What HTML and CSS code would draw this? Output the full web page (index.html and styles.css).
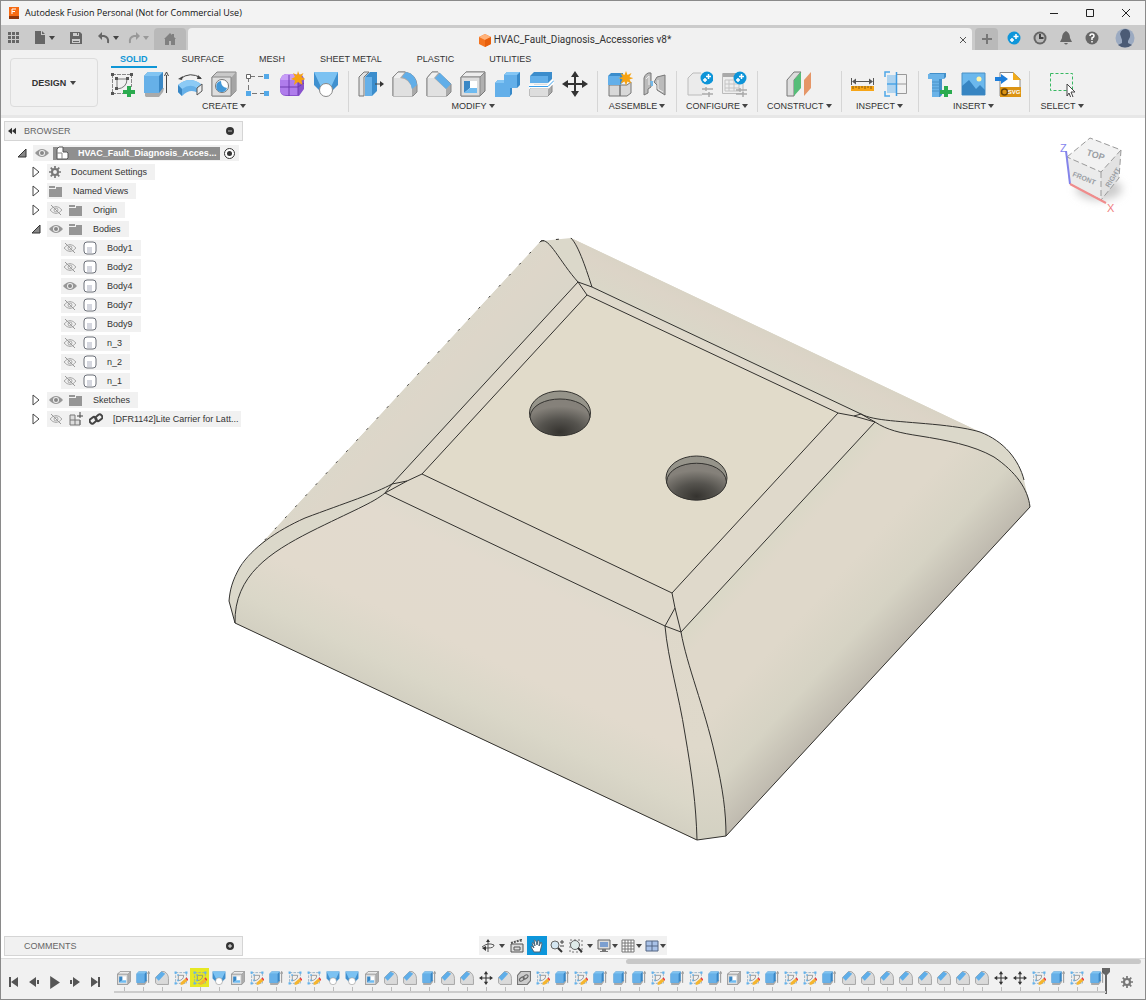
FILE: index.html
```html
<!DOCTYPE html>
<html lang="en">
<head>
  <meta charset="UTF-8" />
  <meta name="viewport" content="width=device-width, initial-scale=1.0"/>
  <title>Autodesk Fusion Personal (Not for Commercial Use)</title>
  <link rel="stylesheet" href="styles.css">
</head>
<body>
  <!-- shared icons -->
  <svg class="sprite" aria-hidden="true">
    <symbol id="sketch" viewBox="0 0 26 26">
      <path d="M3 3.5H23M3.5 3V23M22.5 3V16M3 22.5H14" fill="none" stroke="#888" stroke-dasharray="4 1"/>
      <path d="M8 8H18Q18 17 8 18Z" fill="none" stroke="#777"/>
      <path d="M2 2h3v3H2zM21 2h3v3h-3zM2 21h3v3H2zM6 6h3v3H6zM17 6h3v3h-3zM6 16h3v3H6z" fill="#555"/>
      <path d="M18 15h4v4h4v4h-4v4h-4v-4h-4v-4h4z" fill="#2bab4f"/>
    </symbol>
    <symbol id="sketch-edit" viewBox="0 0 26 26">
      <path d="M3 3H23V23H3Z" fill="none" stroke="#8aa7bd" stroke-width="1.5" stroke-dasharray="5 2"/>
      <path d="M8 8H18Q18 17 8 18Z" fill="none" stroke="#888" stroke-width="1.5"/>
      <path d="M1 1h4v4H1zM21 1h4v4h-4zM1 21h4v4H1zM6 6h3v3H6zM6 16h3v3H6z" fill="#5fb2ee"/>
      <path d="M12 26l1-5 8-7 4 4-8 7z" fill="#f5b52e"/>
      <path d="M21 14l2-2 4 4-2 2z" fill="#ee3b3b"/>
    </symbol>
    <symbol id="extrude" viewBox="0 0 26 26">
      <path d="M2 25V22H15L19 17H21L20 21L16 26H3Z" fill="#aaa"/>
      <path d="M1 5L5 1H20V17L16 22H1Z" fill="#3987c5"/>
      <path d="M1 5H16V22H1Z" fill="#66b0e8"/>
      <path d="M1 5L5 1H20L16 5Z" fill="#81c4f2"/>
      <path d="M23.5 22V4M21.5 5L23.5 1L25.5 5" stroke="#444" fill="none"/>
    </symbol>
    <symbol id="revolve" viewBox="0 0 26 26">
      <path d="M1 14Q13 4 25 14L21 22Q13 17 5 25L1 21Z" fill="#66b0e8"/>
      <path d="M1 14Q13 4 25 14L20 17Q13 12 5 18Z" fill="#8ccaf5"/>
      <path d="M5 18V25L1 21V14Z" fill="#3987c5"/>
      <path d="M20 17L25 13V20L20 24Z" fill="#eee" stroke="#555"/>
      <path d="M3 8Q13 0 24 7" fill="none" stroke="#444"/>
      <path d="M1 8l5-3-1 4zM25 8l-4-4-1 4z" fill="#444"/>
    </symbol>
    <symbol id="hole" viewBox="0 0 26 26">
      <path d="M1 6L6 1H25V20L20 25H1Z" fill="#c9c9c9" stroke="#888"/>
      <path d="M20 7V25L25 20V1Z" fill="#a5a5a5"/>
      <path d="M1 6H20V25H1Z" fill="#dedede" stroke="#888"/>
      <circle cx="11" cy="15" r="6.5" fill="#fff" stroke="#777"/>
      <path d="M10 10A5.5 5.5 0 1 0 16 17Q10 16 10 10Z" fill="#4298d8"/>
    </symbol>
    <symbol id="pattern" viewBox="0 0 26 26">
      <path d="M5 5.5H20M3.5 6V20M7 22.5H20" fill="none" stroke="#777" stroke-dasharray="5 3"/>
      <path d="M1.5 3.5h4v4h-4z" fill="#fff" stroke="#666"/>
      <path d="M19 3h5v5h-5zM1 20h5v5H1zM19 20h5v5h-5z" fill="#54a9e8"/>
    </symbol>
    <symbol id="form" viewBox="0 0 26 26">
      <path d="M1 9Q3 2 9 3H18Q25 3 25 9V18L20 25H7Q1 25 1 18Z" fill="#8953cd"/>
      <path d="M1 9H19V24H7Q1 24 1 18Z" fill="#af7cec"/>
      <path d="M1 9Q3 2 9 3H21L19 9Z" fill="#c79df7"/>
      <path d="M10 4V25M1 16H19L25 12M19 9V24" fill="none" stroke="#6f3bb0"/>
      <path d="M19 0l1.5 4 4-2-2 4 4 2-4 1.5 1 4.5-4.5-3-4 3 1-4.5-4-1.5 4-2-2-4 4 2z" fill="#f6a313"/>
    </symbol>
    <symbol id="loft" viewBox="0 0 26 26">
      <path d="M1 1H25V14L18 21H8L1 14Z" fill="#3f90cf"/>
      <path d="M1 1H25L18 16H8Z" fill="#7cc2f2"/>
      <circle cx="13" cy="19" r="6.5" fill="#fff" stroke="#888"/>
    </symbol>
    <symbol id="presspull" viewBox="0 0 26 26">
      <path d="M1 6L6 1H11L6 6V25H1Z" fill="#e2e2e2" stroke="#777"/>
      <path d="M7 6L12 1H19V20L14 25H7Z" fill="#3b8dcc"/>
      <path d="M7 6H14V25H7Z" fill="#66b0e8"/>
      <path d="M17 13H23" stroke="#444"/>
      <path d="M22 10l4 3-4 3z" fill="#333"/>
    </symbol>
    <symbol id="fillet" viewBox="0 0 26 26">
      <path d="M1 6L6 1H13Q24 3 25 14V21L21 25H1Z" fill="#a9a9a9" stroke="#888"/>
      <path d="M1 7H8Q18 8 20 18V25H1Z" fill="#e0e0e0"/>
      <path d="M1 7L6 1H13L8 7Z" fill="#f0f0f0"/>
      <path d="M10 6L14 1Q24 3 25 14L20 18Q18 8 10 6Z" fill="#61aee8"/>
      <path d="M1 25V6L6 1H13" fill="none" stroke="#888"/>
    </symbol>
    <symbol id="chamfer" viewBox="0 0 26 26">
      <path d="M1 7L6 1H12L25 13V21L21 25H1Z" fill="#aaa" stroke="#888"/>
      <path d="M1 7H8L20 18V25H1Z" fill="#e1e1e1"/>
      <path d="M1 7L6 1H13L8 7Z" fill="#f0f0f0"/>
      <path d="M9 7L14 2L25 13L20 18Z" fill="#61aee8"/>
      <path d="M1 25V7L6 1H12" fill="none" stroke="#888"/>
    </symbol>
    <symbol id="chamfer-small" viewBox="0 0 26 26">
      <path d="M1 12L12 1H17Q25 5 25 14V25H4L1 22Z" fill="#dadada" stroke="#999" stroke-width="1.5"/>
      <path d="M1 12L12 1L19 5L7 18Z" fill="#5faee9"/>
    </symbol>
    <symbol id="shell" viewBox="0 0 26 26">
      <path d="M1 6L6 1H25V20L20 25H1Z" fill="#b0b0b0" stroke="#777"/>
      <path d="M1 6L6 1H25L20 6Z" fill="#ededed" stroke="#888"/>
      <path d="M1 6H20V25H1Z" fill="#ddd" stroke="#888"/>
      <path d="M4 10H17V22H4Z" fill="#fff"/>
      <path d="M4 10L10 10V17L4 22Z" fill="#3987c5"/>
      <path d="M4 22L10 17H17V22Z" fill="#6fbbf0"/>
    </symbol>
    <symbol id="combine" viewBox="0 0 26 26">
      <path d="M1 12L4 9H10V4L13 1H26V14L23 17H18V23L15 26H1Z" fill="#3789c9"/>
      <path d="M1 12H10V4H23V17H16V26H1Z" fill="#63afe9"/>
      <path d="M10 4L13 1H26L23 4ZM1 12L4 9H10V12Z" fill="#83c6f5"/>
    </symbol>
    <symbol id="split" viewBox="0 0 26 26">
      <path d="M2 5L6 1H24V8L20 12H2Z" fill="#3c8dcc"/>
      <path d="M2 5H20V12H2Z" fill="#63afe9"/>
      <path d="M2 18L6 14H24V21L20 25H2Z" fill="#aaa" stroke="#888"/>
      <path d="M2 18H20V25H2Z" fill="#ddd"/>
      <path d="M1 15.5H20L26 9.5" fill="none" stroke="#fff" stroke-width="4"/>
      <path d="M1 15.5H20L26 9.5" fill="none" stroke="#3b9ee9"/>
    </symbol>
    <symbol id="move" viewBox="0 0 26 26">
      <path d="M13 4V22M4 13H22" stroke="#333" stroke-width="2"/>
      <path d="M13 0l4 6H9zM13 26l4-6H9zM0 13l6-4v8zM26 13l-6-4v8z" fill="#333"/>
    </symbol>
    <symbol id="component" viewBox="0 0 26 26">
      <path d="M2 14H13V25H2ZM13 14H20L24 11V22L20 25H13Z" fill="#d8d8d8" stroke="#777"/>
      <path d="M1 5L4 2H16V11L13 14H1Z" fill="#3b8dcc"/>
      <path d="M1 5H13V14H1Z" fill="#63afe9"/>
      <path d="M19 0l1.5 4 4-2-2 4 4 1-4 1.5 2 4-4-2-1.5 4-1.5-4-4 2 2-4-4-1.5 4-1-2-4 4 2z" fill="#f6a313"/>
    </symbol>
    <symbol id="joint" viewBox="0 0 26 26">
      <path d="M3 7Q5 1 10 2V16L7 18V22L3 24Z" fill="#bbb" stroke="#777"/>
      <path d="M16 6L24 4V24L16 19V14L13 11Z" fill="#bbb" stroke="#777"/>
      <path d="M5 8L8 5V14M17 9V18L22 21" fill="none" stroke="#eee"/>
      <path d="M9 10h3v5h-2z" fill="#74b9e9"/>
    </symbol>
    <symbol id="config" viewBox="0 0 26 26">
      <path d="M1 7L6 2H18V24H1Z" fill="#ebebeb"/>
      <path d="M15 24H1V7L6 2H14" fill="none" stroke="#bbb"/>
      <path d="M15 18H26M15 23H26M19 16V20M22 21V26" stroke="#aaa" stroke-width="1.5"/>
      <circle cx="20" cy="7" r="6.5" fill="#0d94d8"/>
      <path d="M21.5 3V8M19 5.5H24M18 7V11M16 9H20" stroke="#fff" stroke-width="1.5"/>
    </symbol>
    <symbol id="config-table" viewBox="0 0 26 26">
      <path d="M1.5 2.5H22V22.5H1.5Z" fill="#eee" stroke="#bbb"/>
      <path d="M2 4H20" stroke="#aaa" stroke-width="4"/>
      <path d="M4 9H18V20H4ZM4 13H18M4 17H18M8 9V20M13 9V20" fill="none" stroke="#c4c4c4"/>
      <path d="M15 19H26M15 23H26M19 17V21M22 21V26" stroke="#aaa" stroke-width="1.5"/>
      <circle cx="19" cy="7" r="6.5" fill="#0d94d8"/>
      <path d="M20.500 3V8M18 5.5H23M17 7V11M15 9H19" stroke="#fff" stroke-width="1.5"/>
    </symbol>
    <symbol id="plane" viewBox="0 0 26 26">
      <path d="M1 9L8 1H15L8 9V25H1Z" fill="#ddd" stroke="#777"/>
      <path d="M8 9L15 1V17L8 25Z" fill="#56bd78"/>
      <path d="M18 9L25 1V17L18 25Z" fill="#e59667"/>
    </symbol>
    <symbol id="measure" viewBox="0 0 26 26">
      <path d="M1.5 7V14M23.5 7V14M3 10.5H22" stroke="#555"/>
      <path d="M2 10.5l4-3v6zM23 10.5l-4-3v6z" fill="#555"/>
      <path d="M1 15H24V20H1Z" fill="#f7a516"/>
      <path d="M3 15v3M6 15v2M9 15v3M12 15v2M15 15v3M18 15v2M21 15v3" stroke="#865b0d"/>
    </symbol>
    <symbol id="interference" viewBox="0 0 26 26">
      <path d="M3 4H13V22H3Z" fill="#aed3ef"/>
      <path d="M13 3.5H22.5V22.5H13M13 13H23" fill="none" stroke="#999"/>
      <path d="M6 1H1V6M1 20V25H6M3 13H13" fill="none" stroke="#4da6e8" stroke-width="1.5"/>
      <path d="M12.5 1V25" stroke="#3f9be0" stroke-width="1.5"/>
    </symbol>
    <symbol id="fastener" viewBox="0 0 26 26">
      <path d="M1 4L3 2H19V6L17 8H15V24L13 26H5V8H1Z" fill="#428fc9"/>
      <path d="M1 3H17V8H1ZM5 8H12V26H5Z" fill="#6ab3e8"/>
      <path d="M5 11H15M5 14H15M5 17H15M5 20H15" stroke="#4b92c7"/>
      <path d="M17 15h4v4h4v4h-4v4h-4v-4h-4v-4h4z" fill="#2bab4f"/>
    </symbol>
    <symbol id="decal" viewBox="0 0 26 26">
      <path d="M1 2H24V24H1Z" fill="#6bb8ed" stroke="#4b90c4"/>
      <path d="M1 24V15L8 9L15 18L19 14L24 19V24Z" fill="#3785c2"/>
      <circle cx="18" cy="8" r="2.5" fill="#fff4a9"/>
    </symbol>
    <symbol id="svgfile" viewBox="0 0 26 26">
      <path d="M5 1.5H18L25 8V25H5Z" fill="#fff" stroke="#888"/>
      <path d="M18 1V9H26Z" fill="#f2ab19"/>
      <path d="M0 6H6V3L13 8L6 13V10H0Z" fill="#1d7edb"/>
      <path d="M5 16H26V26H5Z" fill="#dc9414"/>
      <circle cx="9.5" cy="21" r="3" fill="none" stroke="#6b4403" stroke-width="1.5"/>
    </symbol>
    <symbol id="select" viewBox="0 0 26 26">
      <path d="M1.5 2.5H23.5V19.5H1.5Z" fill="none" stroke="#38b862" stroke-dasharray="3 2"/>
      <path d="M18 13V25L20 22L22 27L24 26L22 21H26Z" fill="#fff" stroke="#444"/>
    </symbol>
    <symbol id="chain" viewBox="0 0 26 26">
      <path d="M1 8L7 1H25V18L19 25H1Z" fill="#ccc" stroke="#777" stroke-width="2"/>
      <g fill="none" stroke="#666" stroke-width="2">
        <ellipse cx="9" cy="15" rx="5" ry="3" transform="rotate(-35 9 15)"/>
        <ellipse cx="16" cy="11" rx="5" ry="3" transform="rotate(-35 16 11)"/>
      </g>
    </symbol>
    <symbol id="eye" viewBox="0 0 14 10">
      <path d="M0 5Q7-3 14 5Q7 13 0 5Z" fill="#979797"/>
      <circle cx="7" cy="5" r="3" fill="#eee"/>
      <circle cx="7" cy="5" r="2" fill="#888"/>
    </symbol>
    <symbol id="eye-off" viewBox="0 0 14 10">
      <path d="M1 5Q7-2 13 5Q7 12 1 5Z" fill="none" stroke="#aaa"/>
      <circle cx="7" cy="5" r="2" fill="none" stroke="#aaa"/>
      <path d="M2 0L12 10" stroke="#999"/>
    </symbol>
    <symbol id="folder" viewBox="0 0 14 12">
      <path d="M0 1H6V3H0ZM0 4H7V2H13V12H0Z" fill="#969696"/>
    </symbol>
    <symbol id="body" viewBox="0 0 14 14">
      <path d="M4 1H10Q13 1 13 4V10Q13 13 10 13H4Q1 13 1 10V4Q1 1 4 1Z" fill="#fff" stroke="#6c7079"/>
      <path d="M4 6H9V12H4Z" fill="#d5d7df"/>
    </symbol>
    <symbol id="gear" viewBox="0 0 14 14">
      <circle cx="7" cy="7" r="3.5" fill="none" stroke="currentColor" stroke-width="2.5"/>
      <path d="M7 0V3M7 11V14M0 7H3M11 7H14M2 2L4 4M10 10L12 12M12 2L10 4M4 10L2 12" stroke="currentColor" stroke-width="2"/>
    </symbol>
    <symbol id="closed" viewBox="0 0 8 12"><path d="M1 1L7 6L1 11Z" fill="#fff" stroke="#444"/></symbol>
    <symbol id="open" viewBox="0 0 10 10"><path d="M9 1V9H1Z" fill="#888" stroke="#333"/></symbol>
    <symbol id="orbit" viewBox="0 0 14 14">
      <path d="M7 1V13M1 8Q7 3 13 6Q13 9 7 9H3" fill="none" stroke="#555"/>
      <path d="M7 0l2 3H5zM5 7v5L1 9z" fill="#333"/>
    </symbol>
    <symbol id="look" viewBox="0 0 14 14">
      <path d="M1 5H13V13H1ZM4 8H10V11H4Z" fill="#ddd" stroke="#555"/>
      <path d="M1 4L11 1V3" fill="none" stroke="#555" stroke-width="2" stroke-dasharray="2 1"/>
    </symbol>
    <symbol id="hand" viewBox="0 0 14 14">
      <path d="M4 13L1 8Q1 6 4 9L2 4Q3 2 5 7L4 1Q6 0 7 6L8 1Q10 1 9 7L11 3Q13 4 11 9L10 13Z" fill="#fff" stroke="#4e6475"/>
    </symbol>
    <symbol id="zoom" viewBox="0 0 14 14">
      <circle cx="5" cy="6" r="4" fill="#d5e7f2" stroke="#666"/>
      <path d="M8 9L12 13" stroke="#333" stroke-width="2"/>
      <path d="M10 3H14M12 1V5M10 7H14" stroke="#444"/>
    </symbol>
    <symbol id="fit" viewBox="0 0 14 14">
      <path d="M1 1H13V13H1Z" fill="none" stroke="#777" stroke-dasharray="2 2"/>
      <circle cx="6" cy="6" r="4.5" fill="#dfebe9" stroke="#666"/>
      <path d="M9 9L13 13" stroke="#333" stroke-width="2"/>
    </symbol>
    <symbol id="display" viewBox="0 0 14 14">
      <path d="M1 1H13V10H1Z" fill="#ddd" stroke="#666"/>
      <path d="M3 3H11V8H3Z" fill="#7c9fd0"/>
      <path d="M5 10H9V12H11V13H3V12H5Z" fill="#777"/>
    </symbol>
    <symbol id="grid" viewBox="0 0 14 14">
      <path d="M1 1H13V13H1ZM4 1V13M7 1V13M10 1V13M1 4H13M1 7H13M1 10H13" fill="#fff" stroke="#777"/>
    </symbol>
    <symbol id="views" viewBox="0 0 14 14">
      <path d="M1 2H13V12H1ZM7 2V12M1 7H13" fill="#a9c2e8" stroke="#556784"/>
    </symbol>
  </svg>

  <div class="window">
    <header class="titlebar">
      <svg class="app-logo" viewBox="0 0 12 14"><path d="M1 1H11V10L10 13H1Z" fill="#f66a12"/><path d="M1 10H11V13H1Z" fill="#91350a"/><path d="M4 8V3H8M4 5.5H7" stroke="#fff" fill="none"/></svg>
      <span class="app-title">Autodesk Fusion Personal (Not for Commercial Use)</span>
      <div class="window-buttons">
        <button aria-label="Minimize"><svg viewBox="0 0 12 12"><path d="M2 6.5H10" stroke="#222"/></svg></button>
        <button aria-label="Maximize"><svg viewBox="0 0 12 12"><path d="M2.5 2.5H9.5V9.5H2.5Z" stroke="#222" fill="none"/></svg></button>
        <button aria-label="Close"><svg viewBox="0 0 12 12"><path d="M2 2L10 10M10 2L2 10" stroke="#222"/></svg></button>
      </div>
    </header>

    <div class="tabbar">
      <div class="quick">
        <button aria-label="Data panel"><svg viewBox="0 0 14 14"><path d="M1 1h3v3H1zM5 1h3v3H5zM9 1h3v3H9zM1 5h3v3H1zM5 5h3v3H5zM9 5h3v3H9zM1 9h3v3H1zM5 9h3v3H5zM9 9h3v3H9z" fill="#666"/></svg></button>
        <button class="drop file" aria-label="File"><svg viewBox="0 0 14 14"><path d="M2 0H8V4H12V13H2ZM9 0L12 3H9Z" fill="#666"/></svg></button>
        <button class="save" aria-label="Save"><svg viewBox="0 0 14 14"><path d="M1 1H11L13 3V13H1Z" fill="#666"/><path d="M4 2H10V5H4ZM3 8H11V12H3Z" fill="#ccc"/><path d="M8 2h1v2H8zM4 10h6v1H4z" fill="#666"/></svg></button>
        <button class="drop" aria-label="Undo"><svg viewBox="0 0 14 14"><path d="M3 5H7Q12 6 11 12" fill="none" stroke="#666" stroke-width="2"/><path d="M5 1V9L1 5Z" fill="#666"/></svg></button>
        <button class="drop redo" aria-label="Redo"><svg viewBox="0 0 14 14"><path d="M11 5H7Q2 6 3 12" fill="none" stroke="#999" stroke-width="2"/><path d="M9 1V9L13 5Z" fill="#999"/></svg></button>
      </div>
      <button class="home" aria-label="Home"><svg viewBox="0 0 14 14"><path d="M1 7L7 1L9 3V2H11V5L13 7H12V13H8V9H6V13H2V7Z" fill="#808080"/></svg></button>
      <div class="doc-tab">
        <span class="doc-name"><svg viewBox="0 0 12 13"><path d="M6 0L12 3V10L6 13L0 10V3Z" fill="#f4741f"/><path d="M6 0L12 3L6 6L0 3Z" fill="#ffb27a"/><path d="M12 3V10L6 13V6Z" fill="#e75f0c"/></svg>HVAC_Fault_Diagnosis_Accessories v8*</span>
        <button aria-label="Close tab"><svg viewBox="0 0 10 10"><path d="M2 2L8 8M8 2L2 8" stroke="#555"/></svg></button>
      </div>
      <button class="new-tab" aria-label="New tab"><svg viewBox="0 0 12 12"><path d="M6 1V11M1 6H11" stroke="#777" stroke-width="2"/></svg></button>
      <div class="account">
        <button aria-label="Extensions"><svg viewBox="0 0 14 14"><circle cx="7" cy="7" r="6.5" fill="#0f96da"/><path d="M9 3V8M6.5 5.5H11.5M5 7V11M3 9H7" stroke="#fff" stroke-width="1.5"/></svg></button>
        <button aria-label="Job status"><svg viewBox="0 0 14 14"><circle cx="7" cy="7" r="6.5" fill="#666"/><circle cx="7" cy="7" r="4.500" fill="#bbb"/><path d="M7 3V7H10.5" fill="none" stroke="#444" stroke-width="2"/></svg></button>
        <button aria-label="Notifications"><svg viewBox="0 0 14 14"><path d="M7 0Q11 2 11 7L13 11H1L3 7Q3 2 7 0ZM5 12H9Q7 15 5 12Z" fill="#666"/></svg></button>
        <button aria-label="Help"><svg viewBox="0 0 14 14"><circle cx="7" cy="7" r="6.5" fill="#666"/><path d="M5 5Q5 3 7 3Q9 3 9 5Q9 6 7 7V9M7 10V11.5" fill="none" stroke="#fff" stroke-width="1.5"/></svg></button>
        <button class="avatar" aria-label="Account"><svg viewBox="0 0 20 20"><circle cx="10" cy="10" r="9.5" fill="#9baac1"/><path d="M5 6Q6 1 11 1Q16 2 15 9L13 13V15L17 17Q10 22 3 17L7 15V12Z" fill="#4b5b75"/></svg></button>
      </div>
    </div>

    <div class="ribbon">
      <button class="workspace drop">DESIGN</button>
      <div class="ribbon-body">
        <nav class="ribbon-tabs">
          <a href="#solid" class="active">SOLID</a>
          <a href="#surface">SURFACE</a>
          <a href="#mesh">MESH</a>
          <a href="#sheet">SHEET METAL</a>
          <a href="#plastic">PLASTIC</a>
          <a href="#utilities">UTILITIES</a>
        </nav>
        <div class="groups">
          <section class="group">
            <div class="tools">
              <button aria-label="Create sketch"><svg><use href="#sketch"/></svg></button>
              <button aria-label="Extrude"><svg><use href="#extrude"/></svg></button>
              <button aria-label="Revolve"><svg><use href="#revolve"/></svg></button>
              <button aria-label="Hole"><svg><use href="#hole"/></svg></button>
              <button aria-label="Pattern"><svg><use href="#pattern"/></svg></button>
              <button aria-label="Create form"><svg><use href="#form"/></svg></button>
              <button aria-label="Loft"><svg><use href="#loft"/></svg></button>
            </div>
            <button class="group-name drop">CREATE</button>
          </section>
          <section class="group">
            <div class="tools">
              <button aria-label="Press pull"><svg><use href="#presspull"/></svg></button>
              <button aria-label="Fillet"><svg><use href="#fillet"/></svg></button>
              <button aria-label="Chamfer"><svg><use href="#chamfer"/></svg></button>
              <button aria-label="Shell"><svg><use href="#shell"/></svg></button>
              <button aria-label="Combine"><svg><use href="#combine"/></svg></button>
              <button aria-label="Split body"><svg><use href="#split"/></svg></button>
              <button aria-label="Move"><svg><use href="#move"/></svg></button>
            </div>
            <button class="group-name drop">MODIFY</button>
          </section>
          <section class="group">
            <div class="tools">
              <button aria-label="New component"><svg><use href="#component"/></svg></button>
              <button aria-label="Joint"><svg><use href="#joint"/></svg></button>
            </div>
            <button class="group-name drop">ASSEMBLE</button>
          </section>
          <section class="group">
            <div class="tools">
              <button aria-label="Configure design"><svg><use href="#config"/></svg></button>
              <button aria-label="Configuration table"><svg><use href="#config-table"/></svg></button>
            </div>
            <button class="group-name drop">CONFIGURE</button>
          </section>
          <section class="group">
            <div class="tools">
              <button aria-label="Offset plane"><svg><use href="#plane"/></svg></button>
            </div>
            <button class="group-name drop">CONSTRUCT</button>
          </section>
          <section class="group narrow">
            <div class="tools">
              <button aria-label="Measure"><svg><use href="#measure"/></svg></button>
              <button aria-label="Interference"><svg><use href="#interference"/></svg></button>
            </div>
            <button class="group-name drop">INSPECT</button>
          </section>
          <section class="group narrow">
            <div class="tools">
              <button aria-label="Insert fastener"><svg><use href="#fastener"/></svg></button>
              <button aria-label="Insert image"><svg><use href="#decal"/></svg></button>
              <button class="svg-tool" aria-label="Insert SVG"><svg><use href="#svgfile"/></svg><span>SVG</span></button>
            </div>
            <button class="group-name drop">INSERT</button>
          </section>
          <section class="group">
            <div class="tools">
              <button aria-label="Select"><svg><use href="#select"/></svg></button>
            </div>
            <button class="group-name drop">SELECT</button>
          </section>
        </div>
      </div>
    </div>

    <main class="canvas">
      <svg class="model" viewBox="1 118 1144 840" role="img" aria-label="Enclosure cover with two holes">
        <defs>
          <linearGradient id="gFront" gradientUnits="userSpaceOnUse" x1="525" y1="560" x2="444" y2="731">
            <stop offset="0" stop-color="#dfdacd"/><stop offset="0.1" stop-color="#e2dace"/><stop offset="0.55" stop-color="#e2dacd"/><stop offset="0.8" stop-color="#dad7c8"/><stop offset="1" stop-color="#d1cec0"/>
          </linearGradient>
          <linearGradient id="gRight" gradientUnits="userSpaceOnUse" x1="778" y1="527" x2="904" y2="643">
            <stop offset="0" stop-color="#dad8c7"/><stop offset="0.12" stop-color="#dfd8ca"/><stop offset="0.45" stop-color="#dfd8ca"/><stop offset="0.75" stop-color="#d6d3c4"/><stop offset="1" stop-color="#bfbaaf"/>
          </linearGradient>
          <linearGradient id="gBack" gradientUnits="userSpaceOnUse" x1="726" y1="350" x2="752" y2="296">
            <stop offset="0" stop-color="#dad7c8"/><stop offset="0.4" stop-color="#dcd4c7"/><stop offset="0.8" stop-color="#d6d3c3"/><stop offset="1" stop-color="#d3d1c0"/>
          </linearGradient>
          <linearGradient id="gLeft" gradientUnits="userSpaceOnUse" x1="485" y1="383" x2="430" y2="333">
            <stop offset="0" stop-color="#dad6c9"/><stop offset="0.5" stop-color="#ddd6c9"/><stop offset="1" stop-color="#dad8ca"/>
          </linearGradient>
          <linearGradient id="gCorner" x1="0" y1="0" x2="0" y2="1">
            <stop offset="0" stop-color="#ded8ca"/><stop offset="0.6" stop-color="#dfd9cb"/><stop offset="1" stop-color="#d3d1c2"/>
          </linearGradient>
          <radialGradient id="gHole" cx="0.5" cy="0.9" r="0.7">
            <stop offset="0" stop-color="#35332f"/><stop offset="0.5" stop-color="#55534e"/><stop offset="1" stop-color="#85817a"/>
          </radialGradient>
        </defs>
        <path d="M541 241L571 238L980 432C1004 441 1019 460 1024 480L1030 507L726 836L696 840L235 623L229 601C231 577 243 560 262 543Z" fill="#dbd8ca"/>
        <path d="M541 241Q550 242 578 282L392 484Q300 519 262 543Z" fill="url(#gLeft)"/>
        <path d="M571 238Q580 250 592 287L861 414Q880 421 940 425Q965 427 980 432Z" fill="url(#gBack)"/>
        <path d="M385 493L665 626C668 660 679 695 685 734C692 775 696 804 697 840L235 623C234 575 271 552 310 532C352 511 373 503 385 493Z" fill="url(#gFront)"/>
        <path d="M875 422L681 632C687 666 704 706 715 755C723 789 726 812 726 836L1030 507C1028 489 1016 472 994 457C973 445 945 440 920 436C900 433 887 430 875 422Z" fill="url(#gRight)"/>
        <path d="M665 626C668 660 679 695 685 734C692 775 696 804 697 840L726 836C726 812 723 789 715 755C704 706 687 666 681 632L675 608Z" fill="url(#gCorner)"/>
        <path d="M578 282L875 422L681 632L665 626L385 493Z" fill="#dfd9cb"/>
        <path d="M587 295L838 413L672 593L422 474Z" fill="#e1dbca"/>
        <g class="edges">
          <path d="M541 241C549 237 560 262 578 282M571 238C579 246 587 272 592 287"/>
          <path d="M578 282L592 287L861 414L875 422L681 632L665 626L385 493L392 484Z"/>
          <path d="M587 295L838 413L672 593L422 474Z"/>
          <path d="M578 282L587 295M838 413L854 416L875 422M854 416L861 414M672 593L675 608L681 632M675 608L665 626M422 474L407 481L385 493M407 481L392 484"/>
          <path d="M392 484C376 493 345 503 305 518C276 531 252 548 240 567C232 581 230 590 229 601L235 623"/>
          <path d="M385 493C373 503 352 511 310 532C271 552 234 575 235 623L697 840L726 836L1030 507C1028 489 1016 472 994 457C973 445 945 440 920 436C900 433 887 430 875 422"/>
          <path d="M861 414C874 421 900 421 940 425C958 427 970 429 980 432C1004 441 1019 460 1024 480"/>
          <path d="M665 626C668 660 679 695 685 734C692 775 696 804 697 840M681 632C687 666 704 706 715 755C723 789 726 812 726 836"/>
          <path d="M541 241L571 238" stroke-dasharray="3 12"/>
          <path d="M541 241L262 543" stroke-dasharray="2 13"/>
          <g fill="#96948a">
            <ellipse cx="560" cy="413" rx="30.5" ry="22"/>
            <path d="M530 417C532 393 588 393 590 417C586 442 534 442 530 417Z" fill="url(#gHole)"/>
            <ellipse cx="696.5" cy="478" rx="30.5" ry="22"/>
            <path d="M666.5 482C668.5 457 724.5 457 726.5 482C722.5 506 670.5 506 666.5 482Z" fill="url(#gHole)"/>
          </g>
        </g>
      </svg>

      <svg class="viewcube" viewBox="0 0 80 90" role="img" aria-label="View cube">
        <defs><filter id="soft" x="-50%" y="-50%" width="200%" height="200%"><feGaussianBlur stdDeviation="4"/></filter></defs>
        <ellipse cx="44" cy="59" rx="23" ry="11" fill="#ccc" filter="url(#soft)"/>
        <path d="M12 27L35 8L66 20L46 42Z" fill="#f2f2f2"/>
        <path d="M12 27L46 42V70L15 54Z" fill="#ebebeb"/>
        <path d="M46 42L66 20L64 48L46 70Z" fill="#e2e2e2"/>
        <path d="M12 27L35 8L66 20L46 42ZM46 42V70L15 54M66 20L64 48L46 70" fill="none" stroke="#999" stroke-dasharray="6 3"/>
        <path d="M11 21L15 54" stroke="#8383ea" stroke-width="2"/>
        <path d="M15 54L51 73" stroke="#f08c8c" stroke-width="2"/>
        <text transform="translate(31 25) rotate(18)" class="face">TOP</text>
        <text transform="translate(17 46) rotate(22)" class="face side">FRONT</text>
        <text transform="translate(54 58) rotate(-58)" class="face side">RIGHT</text>
        <text x="5" y="22" class="axis-z">Z</text>
        <text x="52" y="82" class="axis-x">X</text>
      </svg>

      <aside class="browser">
        <div class="panel-head">
          <svg viewBox="0 0 10 8"><path d="M5 0V8L0 4ZM10 0V8L5 4Z" fill="#333"/></svg>
          <span>BROWSER</span>
          <button aria-label="Collapse browser"><svg viewBox="0 0 8 8"><circle cx="4" cy="4" r="4" fill="#333"/><path d="M2 4H6" stroke="#bbb"/></svg></button>
        </div>
        <ul class="tree">
          <li class="root"><svg class="arrow"><use href="#open"/></svg><div class="item"><svg class="eye"><use href="#eye"/></svg><span class="chosen"><svg class="ico" viewBox="0 0 14 14"><path d="M2 3L4 1H8V6H12L13 7V12L12 13H2Z" fill="#fff" stroke="#555"/><path d="M7 7V13M2 7H7" stroke="#888"/></svg>HVAC_Fault_Diagnosis_Acces...</span><input type="radio" name="active" aria-label="Activate component" checked></div></li>
          <li><svg class="arrow"><use href="#closed"/></svg><div class="item"><svg class="ico cog"><use href="#gear"/></svg><span>Document Settings</span></div></li>
          <li><svg class="arrow"><use href="#closed"/></svg><div class="item"><svg class="ico"><use href="#folder"/></svg><span>Named Views</span></div></li>
          <li><svg class="arrow"><use href="#closed"/></svg><div class="item"><svg class="eye"><use href="#eye-off"/></svg><svg class="ico"><use href="#folder"/></svg><span>Origin</span></div></li>
          <li><svg class="arrow"><use href="#open"/></svg><div class="item"><svg class="eye"><use href="#eye"/></svg><svg class="ico"><use href="#folder"/></svg><span>Bodies</span></div></li>
          <li class="leaf"><div class="item"><svg class="eye"><use href="#eye-off"/></svg><svg class="ico"><use href="#body"/></svg><span>Body1</span></div></li>
          <li class="leaf"><div class="item"><svg class="eye"><use href="#eye-off"/></svg><svg class="ico"><use href="#body"/></svg><span>Body2</span></div></li>
          <li class="leaf"><div class="item"><svg class="eye"><use href="#eye"/></svg><svg class="ico"><use href="#body"/></svg><span>Body4</span></div></li>
          <li class="leaf"><div class="item"><svg class="eye"><use href="#eye-off"/></svg><svg class="ico"><use href="#body"/></svg><span>Body7</span></div></li>
          <li class="leaf"><div class="item"><svg class="eye"><use href="#eye-off"/></svg><svg class="ico"><use href="#body"/></svg><span>Body9</span></div></li>
          <li class="leaf"><div class="item"><svg class="eye"><use href="#eye-off"/></svg><svg class="ico"><use href="#body"/></svg><span>n_3</span></div></li>
          <li class="leaf"><div class="item"><svg class="eye"><use href="#eye-off"/></svg><svg class="ico"><use href="#body"/></svg><span>n_2</span></div></li>
          <li class="leaf"><div class="item"><svg class="eye"><use href="#eye-off"/></svg><svg class="ico"><use href="#body"/></svg><span>n_1</span></div></li>
          <li><svg class="arrow"><use href="#closed"/></svg><div class="item"><svg class="eye"><use href="#eye"/></svg><svg class="ico"><use href="#folder"/></svg><span>Sketches</span></div></li>
          <li><svg class="arrow"><use href="#closed"/></svg><div class="item linked"><svg class="eye"><use href="#eye-off"/></svg><svg class="ico" viewBox="0 0 14 14"><path d="M1 3H6V13H1ZM1 8H11V13H6M11 8V13" fill="#ddd" stroke="#777"/><path d="M11 0V6M8 4H14" stroke="#444"/></svg><svg class="ico" viewBox="0 0 14 14"><g fill="none" stroke="#444" stroke-width="2"><rect x="1" y="6" width="7" height="5" rx="2" transform="rotate(-40 4 9)"/><rect x="6" y="3" width="7" height="5" rx="2" transform="rotate(-40 10 5)"/></g></svg><span>[DFR1142]Lite Carrier for Latt...</span></div></li>
        </ul>
      </aside>

      <div class="comments panel-head">
        <span>COMMENTS</span>
        <button aria-label="Expand comments"><svg viewBox="0 0 8 8"><circle cx="4" cy="4" r="4" fill="#333"/><path d="M2 4H6M4 2V6" stroke="#eee"/></svg></button>
      </div>

      <div class="navbar">
        <button class="drop wide" aria-label="Orbit"><svg><use href="#orbit"/></svg></button>
        <button aria-label="Look at"><svg><use href="#look"/></svg></button>
        <button class="on" aria-label="Pan"><svg><use href="#hand"/></svg></button>
        <button aria-label="Zoom"><svg><use href="#zoom"/></svg></button>
        <button class="drop wide" aria-label="Fit"><svg><use href="#fit"/></svg></button>
        <button class="drop" aria-label="Display settings"><svg><use href="#display"/></svg></button>
        <button class="drop" aria-label="Grid and snaps"><svg><use href="#grid"/></svg></button>
        <button class="drop" aria-label="Viewports"><svg><use href="#views"/></svg></button>
      </div>
    </main>

    <footer class="timeline">
      <div class="player">
        <button aria-label="Go to start"><svg viewBox="0 0 12 12"><path d="M1 1H3V11H1ZM10 1V11L3 6Z" fill="#555"/></svg></button>
        <button aria-label="Step back"><svg viewBox="0 0 12 12"><path d="M8 1V11L1 6ZM9 4H11V8H9Z" fill="#555"/></svg></button>
        <button class="play" aria-label="Play"><svg viewBox="0 0 12 12"><path d="M2 0V12L11 6Z" fill="#555"/></svg></button>
        <button aria-label="Step forward"><svg viewBox="0 0 12 12"><path d="M4 1V11L11 6ZM1 4H3V8H1Z" fill="#555"/></svg></button>
        <button aria-label="Go to end"><svg viewBox="0 0 12 12"><path d="M9 1H11V11H9ZM2 1V11L9 6Z" fill="#555"/></svg></button>
      </div>
      <div class="track" id="track"></div>
      <svg class="marker" viewBox="0 0 8 26"><path d="M0 0H8V4L5 7V26H3V7L0 4Z" fill="#666"/></svg>
      <button class="settings" aria-label="Timeline settings"><svg><use href="#gear"/></svg></button>
      <div class="scrollbar"></div>
    </footer>
  </div>

  <script>
    // S sketch, E extrude, C chamfer, H shell, L loft, M move, R rigid group
    const features = "HECSSLHSESSLLHCCECCMCRSESEEESESEHSESSECCCCCCCCMMSESE";
    const kinds = {
      S: ["sketch-edit", "Sketch"],
      E: ["extrude", "Extrude"],
      C: ["chamfer-small", "Chamfer"],
      H: ["shell", "Shell"],
      L: ["loft", "Loft"],
      M: ["move", "Move"],
      R: ["chain", "Rigid group"]
    };
    const selected = 4;

    document.getElementById("track").innerHTML = [...features].map((f, i) => {
      const [icon, label] = kinds[f];
      return `<button class="step${i === selected ? ' selected' : ''}" aria-label="${label} ${i + 1}"><svg><use href="#${icon}"/></svg></button>`;
    }).join('');
  </script>
</body>
</html>
```
FILE: styles.css
```css
* {
  box-sizing: border-box;
}

body {
  margin: 0;
  font-family: "Liberation Sans", Arial, sans-serif;
  font-size: 9px;
  line-height: 12px;
  color: #333;
}

button {
  display: flex;
  align-items: center;
  justify-content: center;
  padding: 0;
  border: none;
  background: none;
  font: inherit;
  color: inherit;
}

svg {
  display: block;
  flex: none;
}

.sprite {
  position: absolute;
  width: 0;
  height: 0;
}

.window {
  display: flex;
  flex-direction: column;
  height: 100vh;
  min-height: 600px;
  border: 1px solid #8a8a8a;
  background: #f1f1f1;
}

/* small arrow after anything that opens a menu */
.drop::after {
  content: "";
  margin-left: 2px;
  border: 3px solid transparent;
  border-top: 4px solid #444;
  border-bottom: 0;
}

/* title bar */
.titlebar {
  display: flex;
  align-items: center;
  height: 24px;
  padding: 0 13px 0 7px;
  background: #f3f3f3;
}

.app-logo {
  width: 12px;
  height: 14px;
}

.app-title {
  margin-left: 5px;
  font-family: "Open Sans", "Noto Sans", sans-serif;
  font-size: 9px;
  color: #111;
}

.window-buttons {
  display: flex;
  gap: 24px;
  margin-left: auto;
}

.window-buttons svg {
  width: 12px;
  height: 12px;
}

/* document tabs */
.tabbar {
  display: flex;
  align-items: stretch;
  height: 25px;
  padding-top: 3px;
  background: #cbcbcb;
}

.quick {
  display: flex;
  align-items: center;
  gap: 6px;
  width: 153px;
  padding: 0 4px 3px 6px;
}

.quick svg {
  width: 14px;
  height: 14px;
}

.quick .file {
  margin-left: 6px;
}

.quick .save {
  margin: 0 8px;
}

.quick .redo {
  margin-left: 2px;
}

.quick .redo::after {
  border-top-color: #999;
}

.home {
  width: 32px;
  border-radius: 4px 4px 0 0;
  background: #b9b9b9;
}

.home svg {
  width: 14px;
  height: 14px;
}

.doc-tab {
  display: flex;
  flex: 1;
  align-items: center;
  margin: 0 3px 0 2px;
  padding: 2px 4px 0;
  border-radius: 4px 4px 0 0;
  background: #f1f1f1;
}

.doc-name {
  display: flex;
  flex: 1;
  align-items: center;
  justify-content: center;
  gap: 3px;
  font-family: Roboto, sans-serif;
  font-size: 10px;
}

.doc-name svg {
  width: 12px;
  height: 13px;
}

.doc-tab button svg {
  width: 10px;
  height: 10px;
}

.new-tab {
  width: 23px;
  border-radius: 4px 4px 0 0;
  background: #b9b9b9;
}

.new-tab svg {
  width: 12px;
  height: 12px;
}

.account {
  display: flex;
  align-items: center;
  gap: 12px;
  padding: 0 10px 3px 9px;
}

.account svg {
  width: 14px;
  height: 14px;
}

.account .avatar {
  margin-left: 4px;
}

.account .avatar svg {
  width: 20px;
  height: 20px;
}

/* ribbon */
.ribbon {
  display: flex;
  height: 68px;
  padding-left: 9px;
  border-bottom: 3px solid #e7e7e7;
}

.workspace {
  width: 88px;
  height: 49px;
  margin-top: 8px;
  border: 1px solid #dcdcdc;
  border-radius: 4px;
  font-weight: bold;
}

.workspace::after {
  margin-left: 4px;
}

.ribbon-body {
  flex: 1;
  padding-left: 2px;
}

.ribbon-tabs {
  display: flex;
  gap: 15px;
  padding-left: 11px;
}

.ribbon-tabs a {
  height: 18px;
  padding: 3px 10px 0;
  border-bottom: 2px solid transparent;
  color: #333;
  text-decoration: none;
}

.ribbon-tabs .active {
  padding: 3px 9px 0;
  border-color: #0f96d6;
  color: #0f96d6;
  font-weight: bold;
}

.groups {
  display: flex;
  margin-top: 3px;
}

.group {
  display: flex;
  flex-direction: column;
  align-items: center;
  justify-content: space-between;
  height: 41px;
  padding: 0 9px;
  border-right: 1px solid #d6d6d6;
}

.narrow {
  padding: 0 8px;
}

.group:last-child {
  padding: 0 11px;
  border-right: none;
}

.tools {
  display: flex;
  gap: 8px;
}

.tools svg {
  width: 26px;
  height: 26px;
}

.svg-tool {
  position: relative;
}

.svg-tool span {
  position: absolute;
  right: 0;
  bottom: 0;
  font-size: 6px;
  font-weight: bold;
  line-height: 9px;
  color: #fff;
}

/* canvas */
.canvas {
  position: relative;
  flex: 1;
  min-height: 0;
  background: #fff;
}

.model {
  width: 100%;
  height: 100%;
}

.edges {
  fill: none;
  stroke: #33322f;
}

.viewcube {
  position: absolute;
  top: 12px;
  right: 10px;
  width: 80px;
  height: 90px;
}

.face {
  font-size: 9px;
  font-weight: bold;
  fill: #9a9ea4;
}

.side {
  font-size: 7px;
}

.axis-z,
.axis-x {
  font-size: 11px;
  fill: #8585ee;
}

.axis-x {
  fill: #f08080;
}

/* browser panel */
.browser {
  position: absolute;
  top: 3px;
  left: 3px;
  width: 239px;
}

.panel-head {
  display: flex;
  align-items: center;
  height: 20px;
  padding: 0 8px 0 3px;
  border: 1px solid #d5d5d5;
  background: #f1f1f1;
  color: #666;
}

.panel-head svg {
  width: 8px;
  height: 8px;
}

.panel-head span {
  margin-left: 8px;
}

.panel-head button {
  margin-left: auto;
}

.tree {
  display: flex;
  flex-direction: column;
  gap: 3px;
  margin: 4px 0 0;
  padding: 0;
  list-style: none;
}

.tree li {
  display: flex;
  align-items: center;
  height: 16px;
  padding-left: 27px;
}

.tree .root {
  padding-left: 13px;
}

.tree .leaf {
  padding-left: 57px;
}

.arrow {
  width: 10px;
  height: 12px;
  margin-right: 6px;
}

.item {
  display: flex;
  align-items: center;
  gap: 6px;
  height: 16px;
  padding: 0 8px 0 2px;
  background: #f1f1f1;
}

.item > span {
  margin-left: 4px;
  white-space: nowrap;
}

.linked {
  padding-right: 3px;
}

.eye {
  width: 14px;
  height: 10px;
}

.ico {
  width: 14px;
  height: 14px;
}

.cog {
  width: 12px;
  height: 12px;
  color: #777;
}

.item > .chosen {
  display: flex;
  align-items: center;
  gap: 9px;
  width: 167px;
  height: 13px;
  margin-left: -2px;
  padding-left: 2px;
  background: #8f8f8f;
  color: #fff;
  font-weight: bold;
}

.root .item {
  padding-right: 4px;
}

.root input {
  display: grid;
  place-items: center;
  appearance: none;
  width: 11px;
  height: 11px;
  margin: 0 0 0 -2px;
  border: 1px solid #333;
  border-radius: 50%;
  background: #fff;
}

.root input:checked::after {
  content: "";
  width: 5px;
  height: 5px;
  border-radius: 50%;
  background: #333;
}

.comments {
  position: absolute;
  bottom: 2px;
  left: 3px;
  width: 239px;
}

.comments span {
  margin-left: 16px;
}

/* view controls */
.navbar {
  position: absolute;
  bottom: 3px;
  left: 50%;
  display: flex;
  height: 19px;
  transform: translateX(-50%);
  background: #f1f1f1;
}

.navbar button {
  width: 20px;
}

.navbar .drop {
  width: 24px;
}

.navbar .drop::after {
  margin-left: 1px;
}

.navbar .wide {
  width: 28px;
}

.navbar .wide::after {
  margin-left: 4px;
}

.navbar .on {
  background: #0d96db;
}

.navbar svg {
  width: 14px;
  height: 14px;
}

/* timeline */
.timeline {
  position: relative;
  display: flex;
  height: 41px;
  padding-top: 9px;
  border-top: 1px solid #ddd;
}

.player {
  display: flex;
  gap: 8px;
  width: 113px;
  height: 28px;
  padding-left: 7px;
}

.player svg {
  width: 12px;
  height: 12px;
}

.player .play svg {
  width: 13px;
  height: 13px;
}

.track {
  display: flex;
  flex: 1;
  height: 25px;
}

.step {
  position: relative;
  flex: 1;
  align-items: flex-start;
  padding-top: 3px;
  border-bottom: 2px solid #ccc;
}

.step::after {
  content: "";
  position: absolute;
  bottom: 0;
  left: 50%;
  width: 1px;
  height: 4px;
  background: #bbb;
}

.step svg {
  width: 14px;
  height: 14px;
}

.selected {
  background: linear-gradient(#e6e823 19px, transparent 19px);
}

.marker {
  width: 8px;
  height: 26px;
  margin-left: -4px;
}

.settings {
  width: 12px;
  height: 28px;
  margin: 0 12px 0 11px;
  color: #777;
}

.settings svg {
  width: 12px;
  height: 12px;
}

.scrollbar {
  position: absolute;
  top: 0;
  right: 4px;
  width: 45%;
  height: 5px;
  border-radius: 3px;
  background: #c8c8c8;
}
```
